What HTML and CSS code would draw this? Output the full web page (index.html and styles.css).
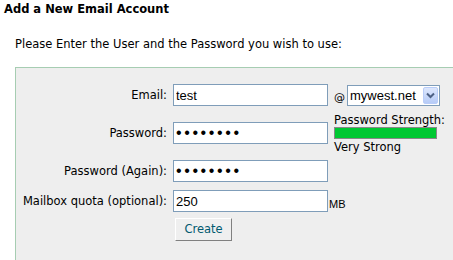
FILE: index.html
```html
<!DOCTYPE html>
<html lang="en">
<head>
  <meta charset="UTF-8">
  <title>Add a New Email Account</title>
  <link rel="stylesheet" href="styles.css">
</head>
<body>

<!-- Heading -->
<h1 class="title">Add a New Email Account</h1>
<p class="intro">Please Enter the User and the Password you wish to use:</p>

<!-- Form box -->
<div class="form-box">
  <div class="row row-email">
    <label class="label" for="email">Email:</label>
    <input class="field" type="text" id="email" value="test">
    <span class="at">@</span>
    <div class="domain-select">
      <span class="domain-text">mywest.net</span>
      <span class="domain-arrow">
        <svg width="9" height="7" viewBox="0 0 9 7"><path d="M1 1.5 L4.5 5 L8 1.5" fill="none" stroke="#4d6185" stroke-width="2"/></svg>
      </span>
    </div>
  </div>

  <div class="row row-pass">
    <label class="label" for="pass">Password:</label>
    <input class="field pass" type="password" id="pass" value="abcdefgh">
    <div class="strength">
      <div class="strength-title">Password Strength:</div>
      <div class="strength-bar"><div class="strength-fill" style="width: 100%"></div></div>
      <div class="strength-text">Very Strong</div>
    </div>
  </div>

  <div class="row row-again">
    <label class="label" for="pass2">Password (Again):</label>
    <input class="field pass" type="password" id="pass2" value="abcdefgh">
  </div>

  <div class="row row-quota">
    <label class="label" for="quota">Mailbox quota (optional):</label>
    <input class="field" type="text" id="quota" value="250">
    <span class="unit">MB</span>
  </div>

  <div class="row row-button">
    <span class="label"></span>
    <button class="create-btn" type="button">Create</button>
  </div>
</div>

</body>
</html>
```

FILE: styles.css
```css
body {
  margin: 0;
  padding: 0;
  background: #fff;
  font-family: "DejaVu Sans", Verdana, sans-serif;
  font-size: 11.5px;
  color: #000;
  overflow: hidden;
}

/* Heading */
.title {
  font-size: 11.5px;
  font-weight: bold;
  margin: 0;
  padding: 2px 0 0 4px;
  line-height: 14px;
}

.intro {
  margin: 21px 0 0 15px;
  line-height: 14px;
}

/* Form box */
.form-box {
  margin: 16px 0 0 15px;
  width: 438px;
  height: 176px;
  padding-top: 16px;
  background-color: #eeeeee;
  border: 1px solid #a6cdb2;
  border-right: none;
  box-sizing: content-box;
}

.row {
  display: flex;
  align-items: center;
  height: 22px;
}

.row-email,
.row-pass {
  margin-bottom: 16px;
}

.row-again {
  margin-bottom: 8px;
}

.row-quota {
  margin-bottom: 6px;
}

.label {
  width: 151px;
  text-align: right;
  margin-right: 6px;
  flex-shrink: 0;
}

.field {
  width: 155px;
  height: 22px;
  box-sizing: border-box;
  border: 1px solid #7f9db9;
  background: #fff;
  padding: 0 2px;
  margin: 0;
  font-family: "Liberation Sans", Arial, sans-serif;
  font-size: 13px;
  color: #000;
}

.field.pass {
  font-size: 16px;
  letter-spacing: 2.6px;
}

/* Domain select */
.at {
  margin: 5px 2px 0 6px;
  font-size: 11px;
  align-self: center;
}

.domain-select {
  display: flex;
  align-items: center;
  width: 93px;
  height: 21px;
  box-sizing: border-box;
  border: 1px solid #7f9db9;
  background: #fff;
  margin-top: 1px;
}

.domain-text {
  flex: 1;
  padding-left: 2px;
  font-family: "Liberation Sans", Arial, sans-serif;
  font-size: 13px;
}

.domain-arrow {
  display: flex;
  align-items: center;
  justify-content: center;
  width: 15px;
  height: 17px;
  margin-right: 1px;
  background: linear-gradient(#dde7fd, #b6cbf7);
  border: 1px solid #b9cdf9;
  box-sizing: border-box;
  border-radius: 2px;
}

/* Strength meter */
.strength {
  margin-left: 6px;
  width: 103px;
  margin-top: 2px;
  white-space: nowrap;
}

.strength-title {
  line-height: 12px;
}

.strength-bar {
  height: 12px;
  border: 1px solid #888;
  background: #ccc;
  box-sizing: border-box;
  margin: 1px 0 2px;
}

.strength-fill {
  height: 100%;
  background-color: #00c832;
}

.strength-text {
  line-height: 13px;
}

/* Unit */
.unit {
  margin: 6px 0 0 1px;
  font-family: "Liberation Sans", Arial, sans-serif;
  font-size: 11px;
}

/* Button */
.create-btn {
  margin-left: 2px;
  height: 23px;
  width: 57px;
  padding: 0;
  background: #efefef;
  border: 1px solid;
  border-color: #fff #808080 #808080 #fff;
  font-family: "DejaVu Sans", Verdana, sans-serif;
  font-size: 11.5px;
  color: #005a70;
}
```
